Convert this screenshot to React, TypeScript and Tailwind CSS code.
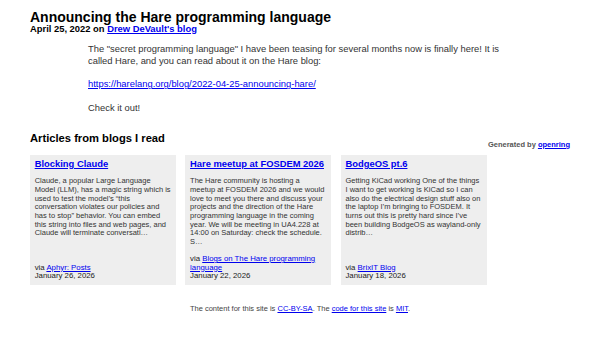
const articles = [
  {
    title: 'Blocking Claude',
    summary:
      'Claude, a popular Large Language Model (LLM), has a magic string which is used to test the model’s “this conversation violates our policies and has to stop” behavior. You can embed this string into files and web pages, and Claude will terminate conversati…',
    source: 'Aphyr: Posts',
    date: 'January 26, 2026',
  },
  {
    title: 'Hare meetup at FOSDEM 2026',
    summary:
      'The Hare community is hosting a meetup at FOSDEM 2026 and we would love to meet you there and discuss your projects and the direction of the Hare programming language in the coming year. We will be meeting in UA4.228 at 14:00 on Saturday: check the schedule. S…',
    source: 'Blogs on The Hare programming language',
    date: 'January 22, 2026',
  },
  {
    title: 'BodgeOS pt.6',
    summary:
      'Getting KiCad working One of the things I want to get working is KiCad so I can also do the electrical design stuff also on the laptop I’m bringing to FOSDEM. It turns out this is pretty hard since I’ve been building BodgeOS as wayland-only distrib…',
    source: 'BrixIT Blog',
    date: 'January 18, 2026',
  },
];

const linkClass = 'text-[#0000ee] underline';

export default function App() {
  return (
    <div className="min-h-[338px] w-[600px] bg-white px-[30px] pt-[10px] font-['Liberation_Sans',Arial,sans-serif] text-black">
      <h1 className="text-[14px] leading-[14px] font-bold">
        Announcing the Hare programming language
      </h1>
      <p className="text-[9.4px] leading-[10px] font-bold">
        April 25, 2022 on{' '}
        <a href="#" className={linkClass}>
          Drew DeVault's blog
        </a>
      </p>

      <article className="ml-[58px] mt-[9.2px] w-[430px] text-[9.4px] leading-[11.7px] text-[#333]">
        <p>
          The "secret programming language" I have been teasing for several months now is
          finally here! It is called Hare, and you can read about it on the Hare blog:
        </p>
        <p className="mt-[11.7px]">
          <a href="#" className={linkClass}>
            https://harelang.org/blog/2022-04-25-announcing-hare/
          </a>
        </p>
        <p className="mt-[11.7px]">Check it out!</p>
      </article>

      <section className="mt-[18.5px]">
        <div className="flex items-start justify-between">
          <h2 className="text-[11.2px] leading-[13px] font-bold">Articles from blogs I read</h2>
          <p className="mt-[8px] text-[7.5px] leading-[9px] font-bold text-[#555]">
            Generated by{' '}
            <a href="#" className={linkClass}>
              openring
            </a>
          </p>
        </div>

        <div className="mt-[5.8px] flex gap-[9.4px]">
          {articles.map((a) => (
            <div
              key={a.title}
              className="flex h-[130.5px] w-[146px] flex-col bg-[#eeeeee] px-[4.7px] pt-[3px] pb-[4px]"
            >
              <a
                href="#"
                className={`${linkClass} whitespace-nowrap text-[9.4px] leading-[11px] font-bold`}
              >
                {a.title}
              </a>
              <p className="mt-[8.6px] text-[7.5px] leading-[8.7px] text-[#333]">{a.summary}</p>
              <div className="mt-auto text-[7.8px] leading-[8.7px] text-[#222]">
                via{' '}
                <a href="#" className={linkClass}>
                  {a.source}
                </a>
                <div>{a.date}</div>
              </div>
            </div>
          ))}
        </div>
      </section>

      <p className="mt-[18.4px] text-center text-[7.5px] leading-[9px] text-[#444]">
        The content for this site is{' '}
        <a href="#" className={linkClass}>
          CC-BY-SA
        </a>
        . The{' '}
        <a href="#" className={linkClass}>
          code for this site
        </a>{' '}
        is{' '}
        <a href="#" className={linkClass}>
          MIT
        </a>
        .
      </p>
    </div>
  );
}
